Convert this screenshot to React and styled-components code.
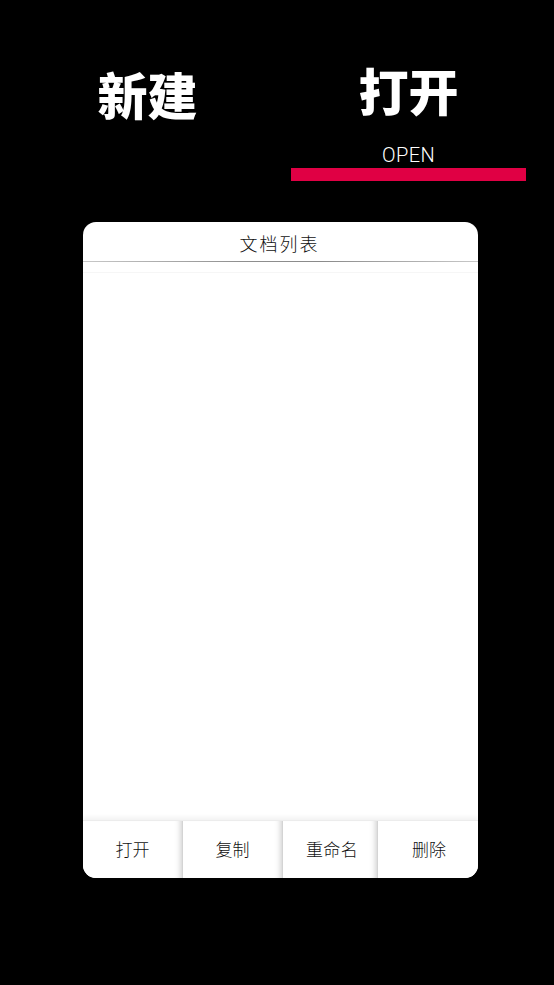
import React from 'react';
import styled, { createGlobalStyle } from 'styled-components';

const GlobalStyle = createGlobalStyle`
  html, body {
    margin: 0;
    padding: 0;
    background: #000;
  }
  body {
    font-family: "Noto Sans CJK SC", "Noto Sans", sans-serif;
  }
`;

const Page = styled.div`
  width: 554px;
  height: 985px;
  background: #000;
  overflow: hidden;
`;

const Tabs = styled.div`
  display: flex;
  gap: 26px;
  padding: 0 0 0 30px;
  height: 222px;
`;

const Tab = styled.div`
  width: 235px;
  height: 181px;
  display: flex;
  flex-direction: column;
  align-items: center;
`;

const TabTitle = styled.div`
  height: 130px;
  padding-top: ${props => (props.$active ? '54px' : '58px')};
  box-sizing: border-box;
  font-size: 50px;
  line-height: 70px;
  font-weight: 900;
  color: #fff;
  white-space: nowrap;
`;

const TabCaption = styled.div`
  height: 38px;
  padding-top: 14px;
  box-sizing: border-box;
  font-family: Roboto, sans-serif;
  font-size: 20px;
  font-weight: 300;
  line-height: 22px;
  letter-spacing: 0.4px;
  color: #fff;
`;

const TabBar = styled.div`
  width: 100%;
  height: 13px;
  background: #e00044;
`;

const Card = styled.div`
  width: 395px;
  height: 656px;
  margin-left: 83px;
  background: #fff;
  border-radius: 13px;
  overflow: hidden;
  display: flex;
  flex-direction: column;
`;

const CardHeader = styled.div`
  height: 39px;
  box-sizing: border-box;
  padding-top: 8px;
  padding-right: 2px;
  text-align: center;
  font-size: 18px;
  line-height: 27px;
  font-weight: 300;
  letter-spacing: 2px;
  color: #111;
`;

const HeaderRule = styled.div`
  height: 1px;
  background: linear-gradient(90deg, #c8c8c8 0%, #8f8f8f 40%, #8a8a8a 60%, #c8c8c8 100%);
`;

const ListArea = styled.div`
  flex: 1;
  margin-top: 10px;
  border-top: 1px solid #f6f6f6;
`;

const Actions = styled.div`
  display: flex;
  height: 57px;
  border-top: 1px solid #ececec;
  box-shadow: 0 -3px 4px rgba(0, 0, 0, 0.05);
`;

const ActionButton = styled.div`
  width: ${props => props.$width}px;
  box-sizing: border-box;
  display: flex;
  align-items: center;
  justify-content: center;
  padding: 0 0 2px ${props => props.$shift || 0}px;
  font-size: 17px;
  font-weight: 300;
  letter-spacing: ${props => props.$spacing || 0}px;
  color: #111;
  background: #fff;
  box-shadow: ${props => (props.$last ? 'none' : 'inset -7px 0 6px -6px rgba(0, 0, 0, 0.22)')};
  border-right: ${props => (props.$last ? 'none' : '1px solid #d4d4d4')};
`;

const actions = [
  { label: '打开', width: 100 },
  { label: '复制', width: 100 },
  { label: '重命名', width: 95, shift: 4, spacing: 0.4 },
  { label: '删除', width: 100, shift: 2, last: true }
];

const App = () => {
  return (
    <Page>
      <GlobalStyle />
      <Tabs>
        <Tab>
          <TabTitle>新建</TabTitle>
        </Tab>
        <Tab>
          <TabTitle $active>打开</TabTitle>
          <TabCaption>OPEN</TabCaption>
          <TabBar />
        </Tab>
      </Tabs>
      <Card>
        <CardHeader>文档列表</CardHeader>
        <HeaderRule />
        <ListArea />
        <Actions>
          {actions.map((action) => (
            <ActionButton
              key={action.label}
              $width={action.width}
              $shift={action.shift}
              $spacing={action.spacing}
              $last={action.last}
            >
              {action.label}
            </ActionButton>
          ))}
        </Actions>
      </Card>
    </Page>
  );
};

export default App;
